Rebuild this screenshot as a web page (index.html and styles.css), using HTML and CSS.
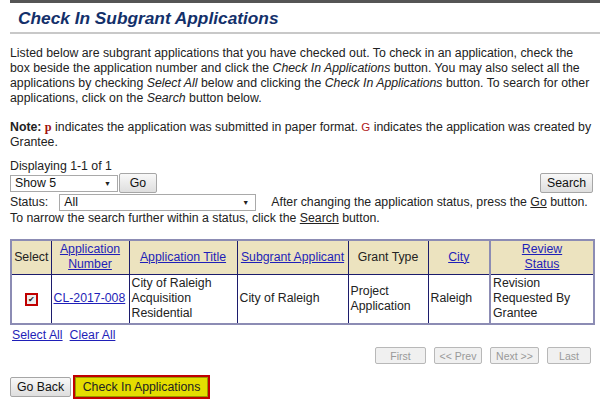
FILE: index.html
```html
<!DOCTYPE html>
<html>
<head>
<meta charset="utf-8">
<link rel="stylesheet" href="styles.css">
</head>
<body>
<div class="page">
  <div class="title-bar">
    <h1 class="title">Check In Subgrant Applications</h1>
  </div>
  <p class="intro">Listed below are subgrant applications that you have checked out. To check in an application, check the box beside the application number and click the <i>Check In Applications</i> button. You may also select all the applications by checking <i>Select All</i> below and clicking the <i>Check In Applications</i> button. To search for other applications, click on the <i>Search</i> button below.</p>
  <p class="note"><b>Note:</b> <span class="mark-p">p</span> indicates the application was submitted in paper format. <span class="mark-g">G</span> indicates the application was created by Grantee.</p>

  <div class="display">Displaying 1-1 of 1</div>
  <div class="row-show">
    <div class="show-group">
      <span class="select sel-show">Show 5<span class="arrow">&#9660;</span></span>
      <button class="btn btn-go">Go</button>
    </div>
    <button class="btn btn-search">Search</button>
  </div>
  <div class="row-status">
    <span class="status-label">Status:</span>
    <span class="select sel-status">All<span class="arrow">&#9660;</span></span>
    <span class="status-help">After changing the application status, press the <u>Go</u> button.</span>
  </div>
  <div class="narrow">To narrow the search further within a status, click the <u>Search</u> button.</div>

  <table class="grid">
    <colgroup>
      <col class="w-sel"><col class="w-num"><col class="w-title"><col class="w-app"><col class="w-type"><col class="w-city"><col class="w-status">
    </colgroup>
    <thead>
      <tr>
        <th>Select</th>
        <th><a href="#">Application<br>Number</a></th>
        <th><a href="#">Application Title</a></th>
        <th><a href="#">Subgrant Applicant</a></th>
        <th>Grant Type</th>
        <th><a href="#">City</a></th>
        <th class="c-status"><a href="#">Review<br>Status</a></th>
      </tr>
    </thead>
    <tbody>
      <tr>
        <td class="center"><span class="chk"><span class="chk-box">&#10004;</span></span></td>
        <td><a href="#">CL-2017-008</a></td>
        <td>City of Raleigh Acquisition Residential</td>
        <td>City of Raleigh</td>
        <td>Project Application</td>
        <td>Raleigh</td>
        <td class="c-status">Revision Requested By Grantee</td>
      </tr>
    </tbody>
  </table>
  <div class="sel-links"><a href="#">Select All</a><a href="#">Clear All</a></div>
  <div class="pager">
    <button class="pbtn pb-first">First</button>
    <button class="pbtn pb-prev">&lt;&lt; Prev</button>
    <button class="pbtn pb-next">Next &gt;&gt;</button>
    <button class="pbtn pb-last">Last</button>
  </div>
  <div class="actions">
    <button class="btn btn-back">Go Back</button>
    <button class="btn btn-checkin">Check In Applications</button>
  </div>
</div>
</body>
</html>
```
FILE: styles.css
```css
* { box-sizing: border-box; }
html, body { margin: 0; padding: 0; background: #fff; }
body {
  font-family: "Liberation Sans", Arial, sans-serif;
  font-size: 12.3px;
  line-height: 15px;
  color: #222;
}
.page { padding: 0 7px 0 10px; }
.title-bar {
  border-top: 3px solid #555;
  border-bottom: 2px solid #c8c8c8;
  margin-right: -7px;
  height: 34px;
  padding: 4px 0 0 8px;
}
.title {
  margin: 0;
  font-size: 17.3px;
  line-height: 22px;
  font-weight: bold;
  font-style: italic;
  color: #13306a;
}
.intro { margin: 12px 0 14px; }
.note { margin: 0 0 10px; }
.mark-p { color: #a01010; font-weight: bold; font-family: "Liberation Serif", serif; }
.mark-g { color: #b02020; font-size: 11.5px; }
.display { height: 13px; line-height: 13px; }
.row-show { display: flex; justify-content: space-between; align-items: center; height: 20px; }
.show-group { display: flex; align-items: center; gap: 1px; }
.select {
  display: inline-flex;
  align-items: center;
  justify-content: space-between;
  height: 17px;
  border: 1px solid #a9a9a9;
  background: #fff;
  padding: 0 6px 0 4px;
  color: #111;
  white-space: nowrap;
}
.arrow { font-size: 7px; color: #222; }
.sel-show { width: 108px; }
.sel-status { width: 197px; margin-left: 11px; }
.btn {
  font-family: "Liberation Sans", Arial, sans-serif;
  font-size: 12.3px;
  color: #111;
  background: linear-gradient(#f8f8f8, #dedede);
  border: 1px solid #a6a6a6;
  border-radius: 2px;
  height: 20px;
  padding: 0;
  line-height: 16px;
  white-space: nowrap;
}
.btn-go { width: 38px; }
.btn-search { width: 53px; }
.row-status { display: flex; align-items: center; height: 18px; white-space: nowrap; }
.status-help { margin-left: 15px; }
.narrow { height: 15px; white-space: nowrap; }
.grid {
  margin-top: 13px;
  width: 583px;
  table-layout: fixed;
  border-collapse: collapse;
  border: 2px solid #8c8cb4;
}
.w-sel { width: 40px; }
.w-num { width: 78px; }
.w-title { width: 108px; }
.w-app { width: 111px; }
.w-type { width: 80px; }
.w-city { width: 62px; }
.w-status { width: 104px; }
.grid th, .grid td {
  border: 1px solid #1c1c6c;
  padding: 0 2px;
  font-weight: normal;
  text-align: left;
  vertical-align: middle;
}
.grid th {
  background: #ece3bf;
  text-align: center;
  height: 34px;
  color: #222;
  white-space: nowrap;
}
.grid td { height: 50px; }
.grid tr:first-child th { border-top: 2px solid #8c8cb4; }
.grid .c-status { border-left: 2px solid #8c8cb4; }
.grid a { color: #1f1fb8; text-decoration: underline; }
.center { text-align: center !important; }
.chk {
  display: inline-flex;
  align-items: center;
  justify-content: center;
  width: 13px;
  height: 13px;
  background: #c00000;
  vertical-align: middle;
}
.chk-box {
  display: flex;
  align-items: center;
  justify-content: center;
  width: 9px;
  height: 9px;
  background: #eee;
  font-size: 8px;
  line-height: 9px;
  color: #222;
}
.sel-links { display: flex; gap: 7px; padding-left: 2px; margin-top: 3px; height: 15px; }
.sel-links a { color: #1f1fb8; text-decoration: underline; }
.pager { display: flex; justify-content: flex-end; gap: 8px; margin-top: 4px; padding-right: 2px; }
.pbtn {
  font-family: "Liberation Sans", Arial, sans-serif;
  font-size: 10.5px;
  color: #999;
  background: #f0f0f0;
  border: 1px solid #b8b8b8;
  border-radius: 2px;
  height: 17px;
  padding: 0;
  white-space: nowrap;
}
.pb-first { width: 51px; }
.pb-prev { width: 48px; }
.pb-next { width: 49px; }
.pb-last { width: 44px; }
.actions { display: flex; align-items: center; gap: 2px; margin-top: 11px; }
.btn-back { width: 61px; height: 20px; }
.btn-checkin {
  width: 137px;
  height: 24px;
  background: #e4dd00;
  border: 2px solid #c00000;
  box-shadow: inset 0 0 0 1px #9a9a00;
  border-radius: 0;
  color: #222;
}
```
